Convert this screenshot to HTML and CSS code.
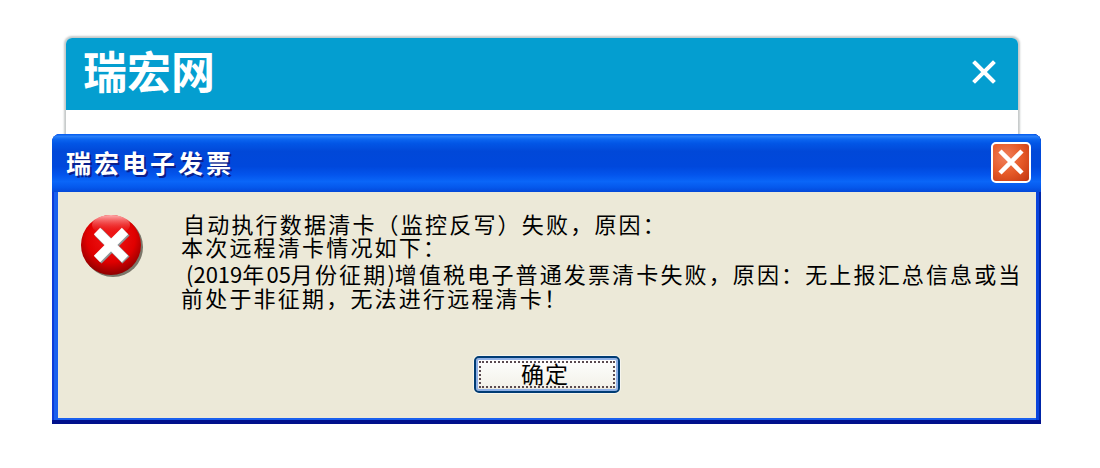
FILE: index.html
```html
<!DOCTYPE html>
<html lang="zh-CN">
<head>
    <meta charset="UTF-8">
    <title>瑞宏电子发票</title>
    <link rel="stylesheet" href="styles.css">
</head>
<body>
    <div class="panel">
        <header class="panel-header">
            <span class="brand">瑞宏网</span>
            <svg class="panel-close" width="24" height="24" viewBox="0 0 24 24">
                <path d="M3 3L21 21M21 3L3 21" stroke="#fff" stroke-width="4" stroke-linecap="square" fill="none"/>
            </svg>
        </header>
    </div>

    <div class="window">
        <div class="title-bar">
            <span class="title-text">瑞宏电子发票</span>
            <div class="close-btn">
                <svg width="28" height="28" viewBox="0 0 28 28">
                    <path d="M3 3L25 25M25 3L3 25" stroke="#fff" stroke-width="4.5" fill="none"/>
                </svg>
            </div>
        </div>
        <div class="client">
            <div class="message-row">
                <svg class="error-icon" width="68" height="68" viewBox="0 0 68 68">
                    <defs>
                        <radialGradient id="ball" cx="50%" cy="38%" r="62%">
                            <stop offset="0%" stop-color="#f01818"/>
                            <stop offset="65%" stop-color="#e00000"/>
                            <stop offset="100%" stop-color="#8e0000"/>
                        </radialGradient>
                        <linearGradient id="shine" x1="0" y1="0" x2="0" y2="1">
                            <stop offset="0%" stop-color="#ffb0b0"/>
                            <stop offset="100%" stop-color="#f01818" stop-opacity="0"/>
                        </linearGradient>
                    </defs>
                    <circle cx="35" cy="35" r="30" fill="#4a463c" opacity="0.7"/>
                    <circle cx="33" cy="33" r="30" fill="url(#ball)"/>
                    <ellipse cx="33" cy="13" rx="19" ry="10" fill="url(#shine)"/>
                    <path d="M19 19L47 47M47 19L19 47" stroke="#8f9698" stroke-width="10" fill="none" transform="translate(1 1)"/>
                    <path d="M19 19L47 47M47 19L19 47" stroke="#fff" stroke-width="9" fill="none"/>
                </svg>
                <div class="message">
                    <div class="line line-1">自动执行数据清卡（监控反写）失败，原因：</div>
                    <div class="line line-2">本次远程清卡情况如下：</div>
                    <div class="line line-3"><span class="num">(2019</span>年<span class="num">05</span>月份征期<span class="num">)</span>增值税电子普通发票清卡失败，原因：无上报汇总信息或当</div>
                    <div class="line line-4">前处于非征期，无法进行远程清卡！</div>
                </div>
            </div>
            <div class="actions">
                <button class="ok-btn" type="button"><span class="ok-focus">确定</span></button>
            </div>
        </div>
    </div>
</body>
</html>
```

FILE: styles.css
```css
html, body {
    margin: 0;
    height: 468px;
    overflow: hidden;
    background: #fff;
}
body {
    position: relative;
    font-family: "Liberation Sans", "Noto Sans CJK SC", sans-serif;
}
.panel {
    position: absolute;
    left: 66px;
    top: 38px;
    width: 952px;
    height: 110px;
    border-radius: 6px 6px 0 0;
    background: #fff;
    box-shadow: 0 0 2px 2px #c6caca;
}
.panel-header {
    height: 72px;
    display: flex;
    align-items: center;
    justify-content: space-between;
    padding: 0 22px 0 17px;
    background: #049ed0;
    border-radius: 6px 6px 0 0;
}
.brand {
    font-family: "Noto Sans CJK SC", sans-serif;
    font-weight: 700;
    font-size: 44px;
    line-height: 60px;
    margin-bottom: 9px;
    color: #fff;
}
.panel-close {
    display: block;
    margin-bottom: 4px;
}
.window {
    position: absolute;
    left: 52px;
    top: 134px;
    width: 989px;
    height: 290px;
    display: flex;
    flex-direction: column;
    box-sizing: border-box;
    padding: 0 5px 6px 6px;
    background: #1a60ee;
    border-radius: 8px 8px 0 0;
    box-shadow: inset 0 -4px 0 #00108c, inset -2px 0 0 #0026a8, inset -5px 0 0 #0a44dc, inset 2px 0 0 #0c3cd8;
}
.title-bar {
    height: 58px;
    margin: 0 -5px 0 -6px;
    padding: 0 10px 2px 14px;
    box-sizing: border-box;
    display: flex;
    align-items: center;
    justify-content: space-between;
    border-radius: 8px 8px 0 0;
    background: linear-gradient(180deg, #0058ee 0%, #2a80f8 4%, #0c66f0 9%, #0256e6 16%, #0148d8 30%, #0048dc 56%, #0354ec 70%, #0a66f8 82%, #0558ec 92%, #0448d8 100%);
}
.title-text {
    font-family: "Noto Sans CJK SC", sans-serif;
    font-weight: 700;
    font-size: 25px;
    letter-spacing: 3px;
    color: #fff;
    text-shadow: 2px 2px 0 #0a1f8c;
}
.close-btn {
    width: 40px;
    height: 41px;
    display: flex;
    align-items: center;
    justify-content: center;
    box-sizing: border-box;
    border: 2px solid #fff;
    border-radius: 5px;
    background: radial-gradient(circle at 35% 35%, #f0805c 0%, #e65a28 50%, #c83c14 90%, #a82a08 100%);
}
.close-btn svg {
    display: block;
}
.client {
    flex: 1;
    display: flex;
    flex-direction: column;
    background: #ece9d8;
}
.message-row {
    display: flex;
    align-items: flex-start;
    padding: 19px 0 0 20px;
}
.error-icon {
    flex: none;
    display: block;
    margin: 1px 35px 0 0;
}
.message {
    color: #000;
    font-family: "Noto Sans CJK SC", sans-serif;
    font-size: 22px;
    white-space: nowrap;
}
.line {
    height: 25px;
    line-height: 25px;
    letter-spacing: 2.2px;
}
.line-1 {
    margin-left: 2px;
}
.line-2 {
    margin-top: -2px;
}
.line-3 {
    margin-left: 5px;
    margin-top: 2px;
    letter-spacing: 2.14px;
}
.line-4 {
    margin-top: -1px;
}
.num {
    letter-spacing: 0;
}
.actions {
    display: flex;
    justify-content: center;
    margin-top: auto;
    padding: 0 0 25px 0;
}
.ok-btn {
    width: 146px;
    height: 37px;
    padding: 3px;
    box-sizing: border-box;
    border: 2px solid #003c74;
    border-radius: 5px;
    background: linear-gradient(180deg, #fff 0%, #f3f2ea 85%, #e4e2d4 100%);
    box-shadow: inset 0 0 0 2px #8fb0e6, 0 0 0 1px #f6f5ee;
    font-family: "Noto Sans CJK SC", sans-serif;
    font-size: 23px;
    color: #000;
}
.ok-focus {
    display: flex;
    align-items: center;
    justify-content: center;
    height: 100%;
    box-sizing: border-box;
    border: 2px dotted #5a4a50;
    padding-right: 4px;
    padding-bottom: 2px;
    letter-spacing: 1px;
    line-height: 1;
}
```
